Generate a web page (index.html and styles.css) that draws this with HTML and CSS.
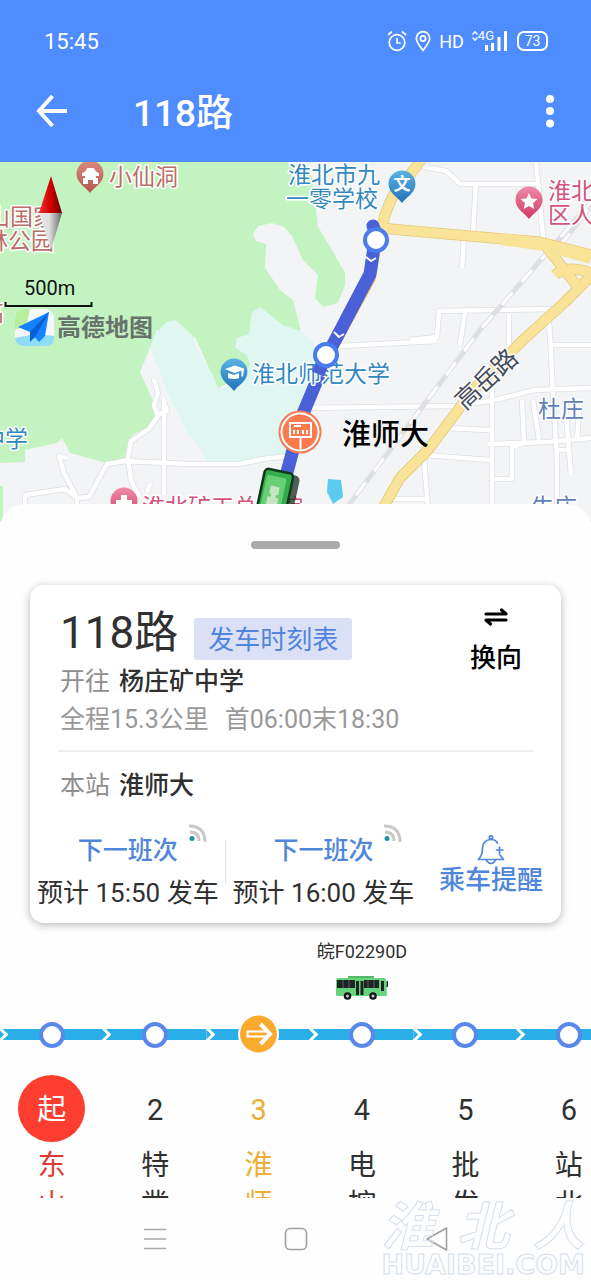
FILE: index.html
```html
<!DOCTYPE html>
<html lang="zh-CN">
<head>
<meta charset="utf-8">
<meta name="viewport" content="width=device-width, initial-scale=1">
<title>118路</title>
<link rel="stylesheet" href="styles.css">
</head>
<body>
<div class="app">
  <header class="top">
    <div class="status">
      <span class="clock">15:45</span>
      <div class="indicators">
        <svg width="20" height="22" viewBox="0 0 20 22" fill="none" stroke="#fff" stroke-width="1.7" stroke-linecap="round"><circle cx="10" cy="12.500" r="7.800"/><path d="M10 8.500v4.500h3M1.500 4.500l3-2.500M18.500 4.500l-3-2.500"/></svg>
        <svg width="16" height="22" viewBox="0 0 16 22" fill="none" stroke="#fff" stroke-width="1.700"><path d="M8 20.500C4 15.500 1.300 12 1.300 8.300a6.700 6.700 0 0 1 13.400 0C14.700 12 12 15.500 8 20.500z"/><circle cx="8" cy="8.500" r="2.600"/></svg>
        <span class="hd">HD</span>
        <span class="signal">
          <svg width="6" height="12" viewBox="0 0 6 12" fill="none" stroke="#fff" stroke-width="1.500"><path d="M.5 4.500L3 1.800l2.500 2.700M.5 7.500L3 10.200l2.500-2.700"/></svg>
          <span class="gen">4G</span>
          <svg class="bars" width="22" height="22" viewBox="0 0 22 22" fill="#fff"><path d="M0 15h3v6H0zM6 13h3v8H6zM12.500 7h3v14h-3zM19 1h3v20h-3z"/></svg>
        </span>
        <span class="battery">73</span>
      </div>
    </div>
    <div class="bar">
      <button class="icon-btn" aria-label="返回"><svg width="32" height="34" viewBox="0 0 32 34" fill="none" stroke="#fff" stroke-width="4"><path d="M16.500 2L3 17l13.500 15M3.500 17H31"/></svg></button>
      <h1 class="title">118路</h1>
      <button class="icon-btn" aria-label="更多"><svg width="10" height="34" viewBox="0 0 10 34" fill="#fff"><circle cx="5" cy="5" r="4"/><circle cx="5" cy="17" r="4"/><circle cx="5" cy="29.500" r="4"/></svg></button>
    </div>
  </header>

  <section class="map" aria-label="地图">
    <svg class="canvas" viewBox="0 162 591 360" preserveAspectRatio="xMidYMin slice">
      <defs>
        <linearGradient id="blue" x1="0" y1="0" x2="0" y2="1"><stop offset="0" stop-color="#5bb4e4"/><stop offset="1" stop-color="#2272b8"/></linearGradient>
        <linearGradient id="rose" x1="0" y1="0" x2="0" y2="1"><stop offset="0" stop-color="#f08ba9"/><stop offset="1" stop-color="#cf3765"/></linearGradient>
        <linearGradient id="brick" x1="0" y1="0" x2="0" y2="1"><stop offset="0" stop-color="#d98a80"/><stop offset="1" stop-color="#b6564e"/></linearGradient>
        <linearGradient id="red" x1="0" y1="0" x2="1" y2="0"><stop offset="0" stop-color="#e33"/><stop offset=".5" stop-color="#d00000"/><stop offset="1" stop-color="#600"/></linearGradient>
        <linearGradient id="steel" x1="0" y1="0" x2="1" y2="0"><stop offset="0" stop-color="#e8e8e8"/><stop offset=".45" stop-color="#ddd"/><stop offset="1" stop-color="#666"/></linearGradient>
        <path id="pin" d="M0 18C-3 13-13.500 8.500-13.500-1a13.500 13.500 0 0 1 27 0C13.500 8.500 3 13 0 18z"/>
        <path id="roads" d="M421 166l25 5 14 13h78M536 162l8 84M476 183l-3 49M464 238l-2 30M410 340l27-3 2-26 114-2M465 312l-5 33M509 314v36M548 310l3 40 2 48 4 60v64M550 345h41M340 346l97-5M305 408l150-2 40-6 40-10 56-2M447 428l40 2h4M425 455l65 5M424 458l5 64M390 499h38M492 388v134M488 444l60-2 43-4M522 400l2 43-12 4v32h-20M533 400l6 40M565 400l6 75M580 400l-3 40M556 450h13M154 379l4 14-4 12 4 11-9 13-18 12-3 17 3 22 9 18M164 400v95M156 415l11-4-4-12M25 522v-27l40-6 12 9 12-1 18-33 18-3 64 3h50l30-6 27-2M77 498v24M77 498l-13-25-5-17 8 2M147 492l3-9"/>
      </defs>
      <rect y="162" width="591" height="360" fill="#f3f4f6"/>
      <path fill="#c3f3c1" d="M0 162H286L312 176 318 227 332 250 345 273 345 285 338 303 323 307 315 298 318 275 303 260 292 236 284 227 272 223 258 226 253 234 256 241 266 244 265 268 280 290 293 300 301 332 250 372 218 388 195 337 157 330 150 348 142 372 153 395 157 412 152 425 133 435 127 448 125 458 107 463 70 453 62 438 57 443 25 450 25 462 0 463z"/>
      <path fill="#c3f3c1" d="M0 486h3v36H0z"/>
      <path fill="#e0f6f1" d="M157 332L166 322 176 320 192 335 200 355 213 375 218 388 229 387 250 365 247 355 235 348 237 338 249 334 252 312 260 307 283 325 301 331 320 350 302 410 298 455 255 460 235 463 207 462 200 448 187 432 170 398 157 365 150 350z"/>
      <path fill="#f3f4f6" d="M140 372l10-24 7 17 14 36 17 33 18 28h-80l4-22 22-16 5-15z"/>
      <path fill="#5cc9ee" d="M328 479l13 1 2 17-10 7-6-12z"/>
      <g fill="none" stroke-linejoin="round">
        <use href="#roads" stroke="#dcdee3" stroke-width="6"/>
        <use href="#roads" stroke="#fff" stroke-width="4.500"/>
        <path stroke="#dedfe3" stroke-width="5" d="M591 202L480 330 345 510M560 246l31-40"/>
        <path stroke="#fff" stroke-width="3" stroke-dasharray="16 14" d="M591 202L480 330 345 510M560 246l31-40"/>
        <path stroke="#e3c876" stroke-width="11" d="M421 160q-8 12-23 28-10 14-16 38M380 228l55 5 105 9 51 13M545 245l33 42M591 273q-24-9-36 2M591 276l-26 26-42 38-50 50-45 60-28 28-25 44"/>
        <path stroke="#f9e398" stroke-width="9.500" d="M421 160q-8 12-23 28-10 14-16 38M380 228l55 5 105 9 51 13M545 245l33 42M591 273q-24-9-36 2M591 276l-26 26-42 38-50 50-45 60-28 28-25 44"/>
        <path stroke="#f9e398" stroke-width="12" d="M500 239l45 6 46 13"/>
        <path stroke="#e3bd6a" stroke-width="3" d="M380 245l-6 35-44 80"/>
        <path stroke="#4a60d6" stroke-width="13" stroke-linecap="round" d="M373 226l3 8-6 40-42 80-26 62-20 75"/>
        <path stroke="#fff" stroke-width="2" d="M366 257l5 4 5-3M334 332l5 5 5-3"/>
      </g>

      <use href="#pin" x="90" y="175" fill="url(#brick)"/>
      <path fill="#fff" d="M82 173q4-1 5-5h7q1 4 5 5v3h-3v2h2v6h-5v-4h-5v4h-5v-6h2v-2h-3z"/>
      <use href="#pin" x="402" y="185" fill="url(#blue)"/>
      <use href="#pin" x="529" y="201" fill="url(#rose)"/>
      <path fill="#fff" d="M529 193l2.500 5.500 6 .6-4.500 4 1.300 6-5.300-3-5.300 3 1.300-6-4.500-4 6-.6z"/>
      <use href="#pin" x="234" y="373" fill="url(#blue)"/>
      <path fill="#fff" d="M225 369l10-3.500 9 3-1 8h-1.500v-6l-7 2.500zM228 373l6 2 5-2v5q-5 2-11 0z"/>
      <use href="#pin" x="124" y="502" fill="url(#rose)"/>
      <path fill="#fff" d="M121 495h6v5h5v5h-16v-5h5z"/>

      <g class="poi">
        <text class="brick" x="109" y="185">小仙洞</text>
        <text class="brick" x="-13" y="225">山国家</text>
        <text class="brick" x="-15" y="249">林公园</text>
        <text class="brick" x="-19" y="321">高</text>
        <text class="blue" x="288" y="183">淮北市九</text>
        <text class="blue" x="286" y="207">一零学校</text>
        <text class="blue" x="252" y="382">淮北师范大学</text>
        <text class="blue" x="-18" y="447">中学</text>
        <text class="rose" x="548" y="199">淮北市</text>
        <text class="rose" x="548" y="223">区人民</text>
        <text class="rose" x="142" y="515">淮北矿工总医院</text>
        <text class="slate" x="538" y="417">杜庄</text>
        <text class="slate" x="531" y="515">牛庄</text>
        <text class="street" x="465" y="411" transform="rotate(-43 465 411)">高岳路</text>
      </g>
      <text class="glyph" x="402" y="190">文</text>
      <path stroke="#4a60d6" stroke-width="13" d="M323 362l-5 12"/>
      <g fill="#fff" stroke="#4a7cf0" stroke-width="4"><circle cx="376" cy="240" r="11"/><circle cx="326" cy="355" r="11"/></g>

      <path fill="url(#red)" d="M51 176L39 213h23z"/>
      <path fill="url(#steel)" d="M39 213h23l-11 37z"/>

      <text class="scale" x="24" y="295">500m</text>
      <path fill="none" stroke="#111" stroke-width="2" d="M5.500 302v4h86v-4"/>
      <rect x="15" y="309" width="39" height="37" rx="9" fill="#f5f7f8"/>
      <path fill="#b9ee9c" d="M24 309h6l-4 17-11 4v-12q1-9 9-9z"/>
      <path fill="#8edcf8" d="M15 338l20-4 19 2v2q0 8-9 8H24q-8 0-9-8z"/>
      <path fill="#1583ff" d="M49 312L18 327l12 5 9 10 6-6z"/>
      <path fill="#0a5fd8" d="M49 312L30 332v10l5-5z"/>
      <text class="brand" x="57" y="336">高德地图</text>

      <circle cx="300" cy="432" r="20.500" fill="#fff" stroke="#f47a52" stroke-width="2"/>
      <circle cx="300" cy="432" r="17.500" fill="#fa7b50"/>
      <path fill="none" stroke="#fff" stroke-width="2" d="M290 423h21v14h-21zM294 426h7M300.500 437v13M294 430v4M298 430v4M303 430v4M307 430v4"/>
      <text class="stop" x="342" y="445">淮师大</text>

      <g transform="rotate(12 276 500)">
        <rect x="262" y="472" width="33" height="60" rx="5" fill="#1a2d20" opacity=".75"/>
        <rect x="259" y="471" width="29" height="60" rx="4" fill="#35ad4c" stroke="#0d3a1b" stroke-width="2.500"/>
        <rect x="262" y="477" width="20" height="50" rx="2" fill="#67cf74"/>
        <path fill="#c6e3c2" d="M268 487h9v8h-2v3h3v8h-11v-8h3v-3h-2z"/>
      </g>
    </svg>
  </section>

  <main class="sheet">
    <div class="handle"></div>
    <section class="card">
      <div class="head">
        <div class="line">
          <div class="name-row"><h2 class="route">118路</h2><button class="timetable">发车时刻表</button></div>
          <p class="row"><span class="muted">开往</span><strong class="strong">杨庄矿中学</strong></p>
        </div>
        <button class="switch">
          <svg width="24" height="20" viewBox="0 0 24 20" fill="none" stroke="#000" stroke-width="3.200" stroke-linecap="round" stroke-linejoin="round"><path d="M2 7h20l-4.500-4M22 13H2l4.500 4"/></svg>
          换向
        </button>
      </div>
      <p class="row facts"><span>全程15.3公里</span><span>首06:00末18:30</span></p>
      <hr class="rule">
      <p class="row here"><span class="muted">本站</span><strong class="strong">淮师大</strong></p>
      <div class="departures">
        <div class="departure">
          <span class="next">下一班次<svg class="live" width="19" height="18" viewBox="0 0 19 18" fill="none" stroke="#c9c9c9" stroke-width="3"><path d="M1 2q16 0 16 16M2 8q9 0 9 9"/><circle cx="4" cy="14.500" r="2.500" fill="#1d93a8" stroke="none"/></svg></span>
          <span class="time">预计 15:50 发车</span>
        </div>
        <div class="departure">
          <span class="next">下一班次<svg class="live" width="19" height="18" viewBox="0 0 19 18" fill="none" stroke="#c9c9c9" stroke-width="3"><path d="M1 2q16 0 16 16M2 8q9 0 9 9"/><circle cx="4" cy="14.500" r="2.500" fill="#1d93a8" stroke="none"/></svg></span>
          <span class="time">预计 16:00 发车</span>
        </div>
        <button class="remind">
          <svg width="28" height="30" viewBox="0 0 28 30" fill="none" stroke="#4f86dc" stroke-width="1.700" stroke-linecap="round" stroke-linejoin="round"><circle cx="14" cy="2.500" r="1.700"/><path d="M20.500 8C19.500 6 17.500 4.500 14 4.500c-5 0-8.500 3.500-8.500 8.500 0 5-.5 7-4 11.500h25l-3.500-4.500M9.500 25.500q4.500 6 9 0M19.500 15h6.500M22.500 12v6.500"/></svg>
          乘车提醒
        </button>
      </div>
    </section>

    <ol class="stations">
      <li class="station">
        <div class="slot"></div>
        <div class="node"><span class="dot"></span></div>
        <span class="num start">起</span>
        <span class="name first">东山</span>
      </li>
      <li class="station">
        <div class="slot"></div>
        <div class="node"><span class="dot"></span></div>
        <span class="num">2</span>
        <span class="name">特凿</span>
      </li>
      <li class="station current">
        <div class="slot"></div>
        <div class="node"><svg width="41" height="41" viewBox="0 0 41 41"><circle cx="20.500" cy="20.500" r="20.500" fill="#fff"/><circle cx="20.500" cy="20" r="18.500" fill="#faab2d"/><path fill="none" stroke="#fff" stroke-width="2" d="M29 17.500H9.500v5H29"/><path fill="none" stroke="#fff" stroke-width="4" d="M22.500 10l9.500 10-9.500 10"/></svg></div>
        <span class="num">3</span>
        <span class="name">淮师大</span>
      </li>
      <li class="station">
        <div class="slot">
          <span class="plate">皖F02290D</span>
          <svg width="52" height="24" viewBox="0 0 52 24"><path fill="#52b866" d="M12 0h26v3H12z"/><path fill="#66d47c" d="M0 4q0-2 2-2h46q2 0 2 2l1 15q0 1-1 1H1q-1 0-1-1z"/><path fill="#1d2421" d="M1 4h42v8H1z"/><path stroke="#56636b" d="M7 4v8M13 4v8M32 4v8M38 4v8"/><path fill="#66d47c" d="M19 3h9v17h-9z"/><path fill="#1d2421" d="M20 5h3v14h-3zM24.500 5h3v14h-3zM45 5h3v10h-3zM50.500 5h1.500v6h-1.500z"/><circle cx="11.500" cy="20" r="3.800" fill="#151515"/><circle cx="11.500" cy="20" r="1.500" fill="#ccc"/><circle cx="37" cy="20" r="3.800" fill="#151515"/><circle cx="37" cy="20" r="1.500" fill="#ccc"/></svg>
        </div>
        <div class="node"><span class="dot"></span></div>
        <span class="num">4</span>
        <span class="name">电控</span>
      </li>
      <li class="station">
        <div class="slot"></div>
        <div class="node"><span class="dot"></span></div>
        <span class="num">5</span>
        <span class="name">批发</span>
      </li>
      <li class="station">
        <div class="slot"></div>
        <div class="node"><span class="dot"></span></div>
        <span class="num">6</span>
        <span class="name">站北</span>
      </li>
    </ol>
  </main>

  <nav class="system">
    <button class="key" aria-label="任务"><svg width="24" height="22" viewBox="0 0 24 22" stroke="#a9a9a9" stroke-width="1.600"><path d="M1 1.500h22M1 11h22M1 20.500h22"/></svg></button>
    <button class="key" aria-label="主页"><svg width="24" height="24" viewBox="0 0 24 24" fill="none" stroke="#a0a0a0" stroke-width="1.600"><rect x="1.500" y="1.500" width="21" height="21" rx="4.500"/></svg></button>
    <button class="key" aria-label="返回"><svg width="24" height="26" viewBox="0 0 24 26" fill="none" stroke="#a0a0a0" stroke-width="1.600" stroke-linejoin="round"><path d="M21.500 2v22L2 13z"/></svg></button>
    <div class="watermark"><span class="mark-cn"><span>淮</span><span>北</span><span>人</span></span><span class="mark-en">HUAIBEI.COM</span></div>
  </nav>
</div>
</body>
</html>
```
FILE: styles.css
```css
* { box-sizing: border-box; }

body {
  margin: 0;
  background: #fff;
  color: #303030;
  font-family: Roboto, "Noto Sans CJK SC", sans-serif;
  font-size: 26px;
}

button {
  margin: 0;
  padding: 0;
  border: 0;
  background: none;
  color: inherit;
  font: inherit;
  cursor: pointer;
}

h1, h2, p, ol { margin: 0; padding: 0; }

.app {
  display: flex;
  flex-direction: column;
  min-height: 100vh;
  overflow: hidden;
}

/* header */
.top {
  padding: 24px 36px 24px;
  background: #4f8cff;
  color: #fff;
}

.status {
  display: flex;
  align-items: center;
  justify-content: space-between;
  height: 34px;
  padding: 0 7px 0 8px;
}

.clock { font-size: 22px; }

.indicators {
  display: flex;
  align-items: center;
  gap: 8px;
}

.hd { font-size: 18px; }

.signal {
  display: flex;
  align-items: flex-start;
  height: 22px;
}

.gen {
  font-size: 13px;
  line-height: 12px;
}

.bars { margin-left: -9px; }

.battery {
  width: 31px;
  height: 20px;
  margin-left: 2px;
  border: 2px solid #fff;
  border-radius: 7px;
  font-size: 14px;
  line-height: 16px;
  text-align: center;
}

.bar {
  display: flex;
  align-items: center;
  margin-top: 26px;
}

.title {
  flex: 1;
  height: 54px;
  padding-left: 65px;
  font-size: 37px;
  font-weight: 500;
  line-height: 60px;
}

.icon-btn { display: flex; }

/* map */
.map { height: 360px; }

.canvas {
  display: block;
  width: 100%;
  height: 100%;
}

.poi text {
  font-size: 23px;
  stroke: #fff;
  stroke-width: 3px;
  stroke-linejoin: round;
  paint-order: stroke;
}

.poi .brick { fill: #b96e66; }
.poi .blue { fill: #3289bf; }
.poi .rose { fill: #d2527c; }
.poi .slate { fill: #5f7fb8; }
.poi .street { fill: #454c60; font-size: 25px; }

.glyph {
  fill: #fff;
  font-size: 17px;
  font-weight: 700;
  text-anchor: middle;
}

.scale { fill: #111; font-size: 20px; }
.brand { fill: #68736c; font-size: 24px; font-weight: 700; }
.stop { fill: #000; font-size: 29px; font-weight: 500; }

/* sheet */
.sheet {
  position: relative;
  flex: 1;
  margin-top: -18px;
  padding-top: 37px;
  border-radius: 24px 24px 0 0;
  background: #fefefe;
}

.handle {
  width: 89px;
  height: 8px;
  margin: 0 auto 36px;
  border-radius: 4px;
  background: #aaa;
}

.card {
  margin: 0 30px;
  padding: 18px 0 11px;
  border-radius: 14px;
  background: #fff;
  box-shadow: 0 2px 8px rgba(0, 0, 0, .28);
}

.head {
  display: flex;
  justify-content: space-between;
  padding: 0 28px 0 30px;
}

.name-row {
  display: flex;
  align-items: center;
  gap: 16px;
  height: 60px;
}

.route {
  font-size: 44px;
  font-weight: 400;
  line-height: 60px;
}

.timetable {
  height: 42px;
  margin-top: 11px;
  padding: 0 14px;
  border-radius: 3px;
  background: #dce0f7;
  color: #4f86dc;
  line-height: 44px;
}

.row {
  display: flex;
  gap: 9px;
  font-size: 25px;
  line-height: 38px;
}

.muted { color: #8f8f8f; }
.strong { font-weight: 500; }

.switch {
  display: flex;
  flex-direction: column;
  align-items: center;
  gap: 12px;
  width: 74px;
  padding-top: 4px;
  color: #000;
  font-weight: 500;
  line-height: 38px;
}

.facts {
  gap: 16px;
  padding: 0 30px;
  color: #999;
}

.rule {
  height: 2px;
  margin: 11px 28px 15px;
  border: 0;
  background: #eee;
}

.here { padding: 0 30px; }

.departures {
  display: grid;
  grid-template-columns: 7fr 7fr 5fr;
  margin-top: 27px;
}

.departure {
  display: flex;
  flex-direction: column;
  align-items: center;
  gap: 4px;
  line-height: 38px;
  white-space: nowrap;
}

.departure:first-child {
  background: linear-gradient(#e4e4e4, #e4e4e4) right 8px / 1px 44px no-repeat;
}

.next {
  position: relative;
  color: #4f86dc;
  font-size: 25px;
  font-weight: 500;
}

.live {
  position: absolute;
  top: -8px;
  right: -29px;
}

.remind {
  display: flex;
  flex-direction: column;
  align-items: center;
  padding-top: 3px;
  color: #4f86dc;
  font-size: 26px;
  font-weight: 500;
  line-height: 30px;
  white-space: nowrap;
}

/* stations */
.stations {
  display: flex;
  height: 275px;
  overflow: hidden;
  list-style: none;
}

.station {
  flex: 0 0 17.5%;
  display: flex;
  flex-direction: column;
  align-items: center;
}

.station > * { flex-shrink: 0; }

.slot {
  display: flex;
  flex-direction: column;
  align-items: center;
  gap: 12px;
  height: 91px;
  padding-top: 17px;
  font-size: 18px;
  line-height: 24px;
}

.slot svg { flex: none; }

.node {
  position: relative;
  display: flex;
  align-items: center;
  justify-content: center;
  align-self: stretch;
  height: 41px;
  background: linear-gradient(#29aee8, #29aee8) center / 100% 11px no-repeat;
}

.node::after {
  content: "";
  position: absolute;
  left: -5px;
  width: 8px;
  height: 8px;
  border: solid #fff;
  border-width: 3px 3px 0 0;
  transform: rotate(45deg);
}

.dot {
  width: 26px;
  height: 26px;
  border: 4px solid #5a87ea;
  border-radius: 50%;
  background: #fff;
}

.num {
  width: 67px;
  height: 67px;
  margin-top: 20px;
  border-radius: 50%;
  font-size: 29px;
  line-height: 71px;
  text-align: center;
}

.start {
  background: #fc3d30;
  color: #fff;
  line-height: 70px;
}

.name {
  width: 28px;
  padding-top: 4px;
  font-size: 28px;
  line-height: 39px;
  word-break: break-all;
}

.first { color: #dc3b36; }
.current { color: #ecae33; }

/* system keys */
.system {
  position: relative;
  display: flex;
  align-items: center;
  justify-content: center;
  gap: 117px;
  height: 82px;
  background: #fefefe;
}

.key { display: flex; }

.watermark {
  position: absolute;
  right: 6px;
  bottom: 2px;
  display: flex;
  flex-direction: column;
  color: transparent;
  -webkit-text-stroke: 1px #d5e0ec;
  pointer-events: none;
}

.mark-cn {
  display: flex;
  justify-content: space-between;
  font-size: 52px;
  font-style: italic;
  font-weight: 700;
  line-height: 48px;
}

.mark-en {
  font-family: "DejaVu Sans", sans-serif;
  font-size: 27px;
  font-weight: 700;
  line-height: 26px;
}
```
